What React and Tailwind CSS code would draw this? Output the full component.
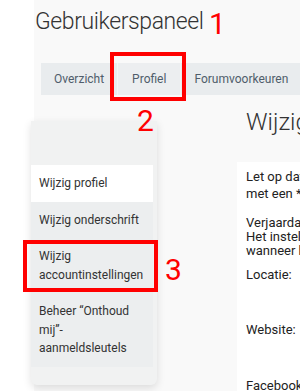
const tabs = ["Overzicht", "Profiel", "Forumvoorkeuren"];

const menu = [
  { label: ["Wijzig profiel"], active: true },
  { label: ["Wijzig onderschrift"] },
  { label: ["Wijzig", "accountinstellingen"] },
  { label: ["Beheer \u201cOnthoud", "mij\u201d-", "aanmeldsleutels"] },
];

const App = () => {
  return (
    <div
      className="relative w-[300px] h-[391px] overflow-hidden flex items-start bg-white"
      style={{ fontFamily: "Roboto, 'Liberation Sans', sans-serif" }}
    >
      <div className="w-[34px] shrink-0 self-stretch bg-white" />
      <div className="flex-1 self-stretch bg-[#f9f9f9] min-w-0">
        <h1 className="pt-[7px] pl-[1px] text-[23px] leading-[30px] tracking-[-0.4px] font-light text-[#333] whitespace-nowrap">
          Gebruikerspaneel
        </h1>

        <div className="mt-[26px] ml-[7px] h-[32px] bg-[#e9ecee] flex items-center text-[12px] text-[#4f5d6b] whitespace-nowrap">
          {tabs.map((t) => (
            <div
              key={t}
              className={
                t === "Profiel"
                  ? "h-full flex items-center px-[14px] bg-[#eceef0] border-x border-[#f4f5f6]"
                  : "h-full flex items-center px-[13px]"
              }
            >
              {t}
            </div>
          ))}
        </div>

        <div className="flex items-start">
          {/* side menu */}
          <div className="ml-[-3px] mt-[26px] w-[126px] h-[264px] shrink-0 bg-[#f1f2f2] rounded-b-[6px] shadow-[0_3px_8px_rgba(0,0,0,0.12)] pr-[4px] pt-[44px] text-[12px] text-[#333]">
            {menu.map((m, i) => (
              <div
                key={i}
                className={`pl-[8px] py-[9px] leading-[18.5px] ${
                  m.active ? "bg-white" : "bg-[#eceeef]"
                }`}
              >
                {m.label.map((l) => (
                  <div key={l} className="whitespace-nowrap">
                    {l}
                  </div>
                ))}
              </div>
            ))}
          </div>

          {/* main content */}
          <div className="ml-[80px] flex-1 min-w-0">
            <h2 className="mt-[13px] pl-[9px] text-[24px] leading-[28px] font-light text-[#333] whitespace-nowrap">
              Wijzig profiel
            </h2>
            <div className="mt-[26px] bg-white pl-[9px] pt-[6px] text-[13px] text-[#222] whitespace-nowrap h-[260px]">
              <div className="leading-[17px]">
                <div>Let op dat alle velden gemarkeerd</div>
                <div>met een * ingevuld moeten worden.</div>
              </div>
              <div className="mt-[14px] leading-[14px]">
                <div>Verjaardag:</div>
                <div>Het instellen van een jaar toont je leeftijd</div>
                <div>wanneer het je verjaardag is.</div>
              </div>
              <div className="mt-[8px] h-[55px] leading-[17px]">Locatie:</div>
              <div className="h-[56px] leading-[17px]">Website:</div>
              <div className="leading-[17px]">Facebook:</div>
            </div>
          </div>
        </div>
      </div>

      {/* annotations */}
      <span className="absolute left-[209px] top-[9px] text-[30px] leading-none text-[#ff0000]">1</span>
      <div className="absolute left-[110px] top-[52px] w-[76px] h-[49px] border-4 border-[#ff0000]" />
      <span className="absolute left-[137px] top-[106px] text-[30px] leading-none text-[#ff0000]">2</span>
      <div className="absolute left-[23px] top-[240px] w-[135px] h-[52px] border-4 border-[#ff0000]" />
      <span className="absolute left-[165px] top-[255px] text-[30px] leading-none text-[#ff0000]">3</span>
    </div>
  );
};

export default App;
